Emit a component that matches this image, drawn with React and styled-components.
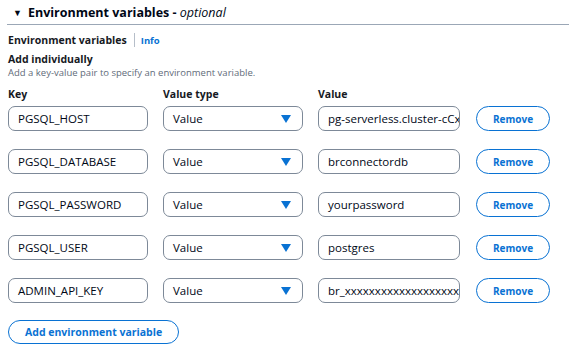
import styled, { createGlobalStyle } from "styled-components";

const GlobalStyle = createGlobalStyle`
  body {
    margin: 0;
    background: #ffffff;
    font-family: "Open Sans", "Noto Sans", sans-serif;
    color: #16191f;
  }
`;

const rows = [
  { key: "PGSQL_HOST", value: "pg-serverless.cluster-cCxxxxxxxx" },
  { key: "PGSQL_DATABASE", value: "brconnectordb" },
  { key: "PGSQL_PASSWORD", value: "yourpassword" },
  { key: "PGSQL_USER", value: "postgres" },
  { key: "ADMIN_API_KEY", value: "br_xxxxxxxxxxxxxxxxxxxxxxxx" },
];

const Page = styled.div`
  padding: 0 0 0 7px;
`;

const Header = styled.div`
  display: flex;
  align-items: center;
  gap: 6px;
  height: 24px;
  padding-left: 6px;
  border-bottom: 1px solid #9ba7b6;
  font-size: 12.5px;
  font-weight: 700;
  color: #000716;
`;

const Caret = styled.span`
  font-size: 9px;
  line-height: 1;
`;

const Optional = styled.i`
  font-weight: 400;
`;

const Body = styled.div`
  padding: 7px 0 0 1px;
`;

const LabelRow = styled.div`
  display: flex;
  align-items: center;
  height: 16px;
  font-size: 10.5px;
  font-weight: 700;
`;

const Divider = styled.span`
  width: 1px;
  height: 14px;
  background: #b6bec9;
  margin: 0 6px 0 7px;
`;

const Info = styled.span`
  color: #0972d3;
  font-size: 9.5px;
`;

const SubTitle = styled.div`
  margin-top: 3px;
  font-size: 10.5px;
  font-weight: 700;
  line-height: 16px;
`;

const Description = styled.div`
  font-size: 9.5px;
  line-height: 12px;
  color: #5f6b7a;
`;

const Grid = styled.div`
  display: grid;
  grid-template-columns: 140px 140px 142px 75px;
  column-gap: 15px;
  row-gap: 18px;
  align-items: center;
  margin-top: 8px;
  & > :nth-child(4n + 4) {
    margin-left: 1px;
  }
`;

const ColHead = styled.div`
  font-size: 10.5px;
  font-weight: 700;
  line-height: 14px;
  margin-bottom: -13px;
`;

const Field = styled.div`
  box-sizing: border-box;
  height: 25px;
  border: 1px solid #7d8998;
  border-radius: 7px;
  display: flex;
  align-items: center;
  padding: 0 9px;
  font-size: 11.5px;
  white-space: nowrap;
  overflow: hidden;
  color: #000716;
`;

const Select = styled(Field)`
  justify-content: space-between;
  padding-right: 11px;
`;

const Arrow = styled.svg`
  width: 10px;
  height: 8px;
  flex: none;
`;

const PillButton = styled.button`
  box-sizing: border-box;
  height: ${(p) => (p.$tall ? 24 : 25)}px;
  border: 1px solid #0972d3;
  border-radius: 14px;
  background: #fff;
  color: #0972d3;
  font-family: inherit;
  font-size: ${(p) => (p.$tall ? 10.5 : 10)}px;
  font-weight: 700;
  padding: 0 16px;
  cursor: pointer;
`;

const Footer = styled.div`
  margin-top: 16px;
`;

function App() {
  return (
    <Page>
      <GlobalStyle />
      <Header>
        <Caret>▼</Caret>
        <span>
          Environment variables - <Optional>optional</Optional>
        </span>
      </Header>
      <Body>
        <LabelRow>
          Environment variables
          <Divider />
          <Info>Info</Info>
        </LabelRow>
        <SubTitle>Add individually</SubTitle>
        <Description>
          Add a key-value pair to specify an environment variable.
        </Description>
        <Grid>
          <ColHead>Key</ColHead>
          <ColHead>Value type</ColHead>
          <ColHead>Value</ColHead>
          <span />
          {rows.map((r) => [
            <Field key={r.key + "k"}>{r.key}</Field>,
            <Select key={r.key + "t"}>
              Value
              <Arrow viewBox="0 0 10 8">
                <path d="M0 0h10L5 8z" fill="#0972d3" />
              </Arrow>
            </Select>,
            <Field key={r.key + "v"}>{r.value}</Field>,
            <PillButton key={r.key + "r"}>Remove</PillButton>,
          ])}
        </Grid>
        <Footer>
          <PillButton $tall>Add environment variable</PillButton>
        </Footer>
      </Body>
    </Page>
  );
}

export default App;
